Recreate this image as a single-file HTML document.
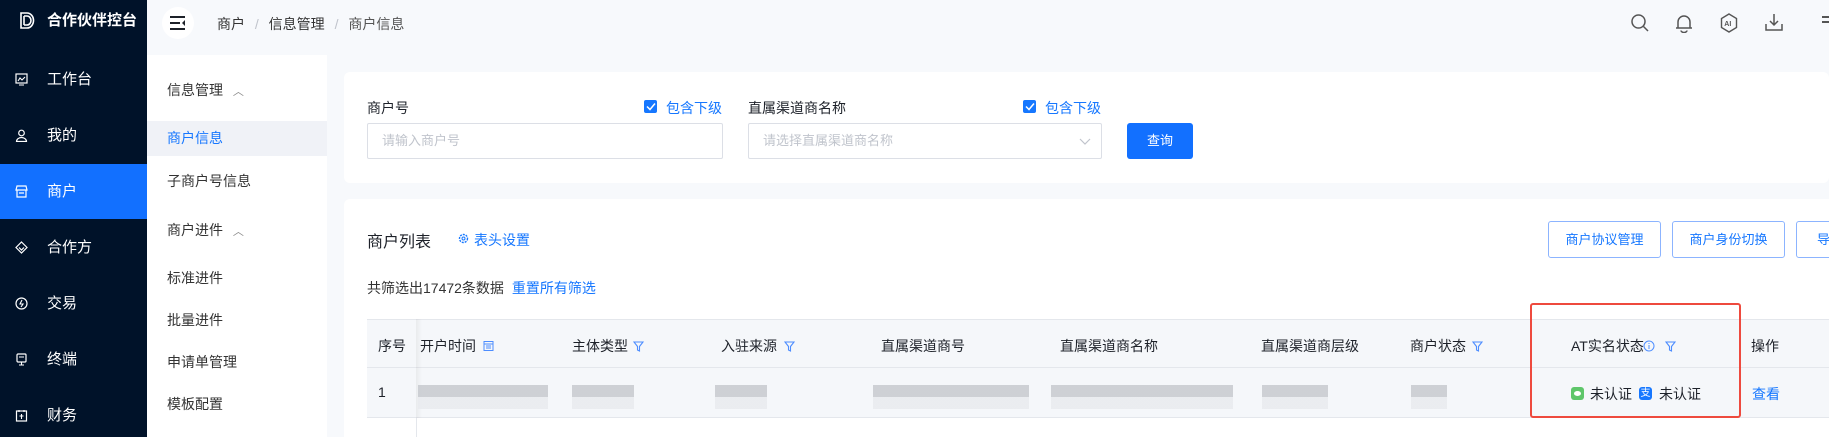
<!DOCTYPE html>
<html><head><meta charset="utf-8"><style>
*{margin:0;padding:0;box-sizing:border-box}
html,body{width:1829px;height:437px;overflow:hidden}
body{background:#f7f9fc;font-family:"Liberation Sans","Noto Sans CJK SC",sans-serif;font-size:14px;color:#1d2129;position:relative}
.a{position:absolute;white-space:nowrap}
.side{position:absolute;left:0;top:0;width:147px;height:437px;background:#001229;color:#fff}
.mi{position:absolute;left:0;width:147px;height:56px;line-height:56px;padding-left:47px;font-size:15px}
.mi svg{position:absolute;left:15px;top:21px}
.sub{position:absolute;left:147px;top:55px;width:180px;height:382px;background:#fff}
.si{position:absolute;left:20px;font-size:14px;color:#333;transform:translateY(-50%)}
.card{position:absolute;background:#fff;border-radius:6px}
.inp{position:absolute;border:1px solid #dcdfe6;border-radius:2px;height:36px;line-height:34px;padding-left:14px;color:#c0c4cc;font-size:13px}
.cb{position:absolute;width:13px;height:13px;background:#1677ff;border-radius:2px}
.btn{position:absolute;border:1px solid #8cb4ff;border-radius:3px;height:37px;line-height:35px;text-align:center;color:#1677ff;font-size:13px;background:#fff}
.th{position:absolute;top:346px;transform:translateY(-50%);font-size:14px;color:#1d2129}
.blur{position:absolute;height:24px;background:linear-gradient(#c4c7cc 0 50%,#e8eaee 50% 100%);opacity:.8}
</style></head><body>
<div class="side">
 <svg class="a" style="left:19px;top:12px" width="16" height="17" viewBox="0 0 16 17"><path d="M2 1h6a6.5 7.5 0 0 1 0 15H2z M5 4v9M5 4h3a4 4.5 0 0 1 0 9H5" fill="none" stroke="#fff" stroke-width="1.6"/></svg>
 <div class="a" style="left:47px;top:12px;font-size:15px;font-weight:bold;line-height:18px">合作伙伴控台</div>
 <div class="mi" style="top:52px"><svg width="13" height="13" viewBox="0 0 13 13"><rect x="1" y="1" width="11" height="9" fill="none" stroke="#fff" stroke-width="1.2"/><path d="M3 8l2-3 2 2 3-3M4 12h5" fill="none" stroke="#fff" stroke-width="1.1"/></svg>工作台</div>
 <div class="mi" style="top:108px"><svg width="13" height="13" viewBox="0 0 13 13"><circle cx="6.5" cy="4" r="2.8" fill="none" stroke="#fff" stroke-width="1.2"/><path d="M1.5 12.5a5 4 0 0 1 10 0z" fill="none" stroke="#fff" stroke-width="1.2"/></svg>我的</div>
 <div class="mi" style="top:164px;height:55px;background:#1270ff"><svg width="13" height="13" viewBox="0 0 13 13"><path d="M2 1h9l1 4H1zM2 5v7h9V5M4 8h5" fill="none" stroke="#fff" stroke-width="1.2"/></svg>商户</div>
 <div class="mi" style="top:220px"><svg width="13" height="13" viewBox="0 0 13 13"><path d="M6.5 1l5.5 5.5-5.5 5.5L1 6.5z M4 6.5l2.5 2.5 2.5-2.5" fill="none" stroke="#fff" stroke-width="1.2"/></svg>合作方</div>
 <div class="mi" style="top:276px"><svg width="13" height="13" viewBox="0 0 13 13"><circle cx="6.5" cy="6.5" r="5.5" fill="none" stroke="#fff" stroke-width="1.2"/><path d="M7 3L5 7h3l-2 3" fill="none" stroke="#fff" stroke-width="1.1"/></svg>交易</div>
 <div class="mi" style="top:332px"><svg width="13" height="13" viewBox="0 0 13 13"><rect x="2" y="1" width="9" height="8" rx="1" fill="none" stroke="#fff" stroke-width="1.2"/><path d="M4 12h5M6.5 9v3M4 4h5" fill="none" stroke="#fff" stroke-width="1.1"/></svg>终端</div>
 <div class="mi" style="top:388px;height:49px"><svg width="13" height="13" viewBox="0 0 13 13"><rect x="1.5" y="2" width="10" height="10" fill="none" stroke="#fff" stroke-width="1.2"/><path d="M4 1v2M9 1v2M6.5 5v5M4.5 7h4" fill="none" stroke="#fff" stroke-width="1.1"/></svg>财务</div>
</div>
<div class="a" style="left:162px;top:7px;width:32px;height:32px;border-radius:50%;background:#fff"></div>
<svg class="a" style="left:170px;top:16px" width="16" height="14" viewBox="0 0 16 14"><path d="M0 1h15M0 7h10M0 13h15" stroke="#1d2129" stroke-width="2"/><path d="M15 4l-3 3 3 3z" fill="#1d2129"/></svg>
<div class="a" style="left:217px;top:14px;font-size:14px;color:#333">商户 <span style="color:#c0c4cc;margin:0 6px">/</span> 信息管理 <span style="color:#c0c4cc;margin:0 6px">/</span> <span style="color:#555">商户信息</span></div>
<svg class="a" style="left:1630px;top:13px" width="20" height="20" viewBox="0 0 20 20"><circle cx="8.5" cy="8.5" r="6.5" fill="none" stroke="#555" stroke-width="1.5"/><path d="M13.5 13.5l4.5 4.5" stroke="#555" stroke-width="1.5"/></svg>
<svg class="a" style="left:1675px;top:13px" width="18" height="20" viewBox="0 0 18 20"><path d="M3 15V9a6 6 0 0 1 12 0v6zM1 15h16M6 17.5a3 2 0 0 0 6 0" fill="none" stroke="#555" stroke-width="1.5"/></svg>
<svg class="a" style="left:1720px;top:13px" width="18" height="20" viewBox="0 0 18 20"><path d="M9 1l7.5 4.5v9L9 19l-7.5-4.5v-9z" fill="none" stroke="#555" stroke-width="1.4"/><text x="4.3" y="13" font-size="7" font-family="Liberation Sans" font-weight="bold" fill="#555">AI</text></svg>
<svg class="a" style="left:1764px;top:12px" width="20" height="20" viewBox="0 0 20 20"><path d="M10 2v11M6 9l4 4 4-4M2 12v6h16v-6" fill="none" stroke="#555" stroke-width="1.5"/></svg>
<div class="a" style="left:1822px;top:16px;width:7px;height:2px;background:#555;box-shadow:0 5px 0 #555"></div>

<div class="sub">
 <div class="si" style="top:35px">信息管理 <span style="color:#888;font-size:11px;margin-left:6px">︿</span></div>
 <div class="a" style="left:0;top:66px;width:180px;height:35px;background:#f0f2f7"></div>
 <div class="si" style="top:83px;color:#1677ff">商户信息</div>
 <div class="si" style="top:126px">子商户号信息</div>
 <div class="si" style="top:175px">商户进件 <span style="color:#888;font-size:11px;margin-left:6px">︿</span></div>
 <div class="si" style="top:223px">标准进件</div>
 <div class="si" style="top:265px">批量进件</div>
 <div class="si" style="top:307px">申请单管理</div>
 <div class="si" style="top:349px">模板配置</div>
</div>

<div class="card" style="left:344px;top:72px;width:1485px;height:111px"></div>
<div class="a" style="left:367px;top:98px;font-size:14px">商户号</div>
<div class="cb" style="left:644px;top:100px"></div><svg class="a" style="left:646px;top:102px" width="10" height="9"><path d="M1 4.5l3 3 5-6" fill="none" stroke="#fff" stroke-width="1.5"/></svg>
<div class="a" style="left:666px;top:98px;color:#1677ff;font-size:14px">包含下级</div>
<div class="inp" style="left:367px;top:123px;width:356px">请输入商户号</div>
<div class="a" style="left:748px;top:98px;font-size:14px">直属渠道商名称</div>
<div class="cb" style="left:1023px;top:100px"></div><svg class="a" style="left:1025px;top:102px" width="10" height="9"><path d="M1 4.5l3 3 5-6" fill="none" stroke="#fff" stroke-width="1.5"/></svg>
<div class="a" style="left:1045px;top:98px;color:#1677ff;font-size:14px">包含下级</div>
<div class="inp" style="left:748px;top:123px;width:354px">请选择直属渠道商名称</div>
<svg class="a" style="left:1079px;top:138px" width="12" height="8"><path d="M1 1l5 5 5-5" fill="none" stroke="#c0c4cc" stroke-width="1.2"/></svg>
<div class="a" style="left:1127px;top:123px;width:66px;height:36px;background:#1270ff;border-radius:3px;color:#fff;text-align:center;line-height:36px;font-size:13px">查询</div>

<div class="card" style="left:344px;top:199px;width:1485px;height:238px;border-radius:6px 0 0 0"></div>
<div class="a" style="left:367px;top:228px;font-size:16px">商户列表</div>
<svg class="a" style="left:458px;top:233px" width="11" height="11" viewBox="0 0 11 11"><circle cx="5.5" cy="5.5" r="4" fill="none" stroke="#1677ff" stroke-width="1.4" stroke-dasharray="2 1"/><circle cx="5.5" cy="5.5" r="1.5" fill="none" stroke="#1677ff"/></svg>
<div class="a" style="left:474px;top:230px;color:#1677ff;font-size:14px">表头设置</div>
<div class="btn" style="left:1548px;top:221px;width:113px">商户协议管理</div>
<div class="btn" style="left:1672px;top:221px;width:113px">商户身份切换</div>
<div class="btn" style="left:1796px;top:221px;width:40px;text-align:left;padding-left:20px">导</div>
<div class="a" style="left:367px;top:278px;font-size:14px;color:#333">共筛选出17472条数据 <span style="color:#1677ff;margin-left:4px">重置所有筛选</span></div>

<div class="a" style="left:367px;top:319px;width:1462px;height:49px;background:#f5f7fa;border-top:1px solid #e4e7ec;border-bottom:1px solid #e4e7ec"></div>
<div class="a" style="left:367px;top:368px;width:1462px;height:50px;background:#f5f7fa;border-bottom:1px solid #e4e7ec"></div>
<div class="a" style="left:416px;top:319px;width:6px;height:118px;background:linear-gradient(90deg,rgba(0,0,0,.05),rgba(0,0,0,0))"></div>
<div class="a" style="left:367px;top:418px;width:1462px;height:19px;background:#fff"></div>
<div class="a" style="left:416px;top:418px;width:1px;height:19px;background:#e4e7ec"></div>
<div class="th" style="left:378px">序号</div>
<div class="th" style="left:420px">开户时间</div>
<svg class="a" style="left:483px;top:340px" width="11" height="11"><rect x="1" y="1.5" width="9" height="9" fill="none" stroke="#4d8dff"/><path d="M1 4h9M3 6h5M3 8h5" stroke="#4d8dff"/></svg>
<div class="th" style="left:572px">主体类型</div>
<div class="th" style="left:721px">入驻来源</div>
<div class="th" style="left:881px">直属渠道商号</div>
<div class="th" style="left:1060px">直属渠道商名称</div>
<div class="th" style="left:1261px">直属渠道商层级</div>
<div class="th" style="left:1410px">商户状态</div>
<div class="th" style="left:1571px">AT实名状态</div>
<svg class="a" style="left:1643px;top:340px" width="12" height="12"><circle cx="6" cy="6" r="5" fill="none" stroke="#4d8dff"/><path d="M6 5v4M6 3v1" stroke="#4d8dff"/></svg>
<div class="th" style="left:1751px">操作</div>
<svg class="a" style="left:633px;top:341px" width="11" height="11"><path d="M1 1h9L6.5 5.5V10L4.5 9V5.5z" fill="none" stroke="#4d8dff" stroke-width="1.1"/></svg>
<svg class="a" style="left:784px;top:341px" width="11" height="11"><path d="M1 1h9L6.5 5.5V10L4.5 9V5.5z" fill="none" stroke="#4d8dff" stroke-width="1.1"/></svg>
<svg class="a" style="left:1472px;top:341px" width="11" height="11"><path d="M1 1h9L6.5 5.5V10L4.5 9V5.5z" fill="none" stroke="#4d8dff" stroke-width="1.1"/></svg>
<svg class="a" style="left:1665px;top:341px" width="11" height="11"><path d="M1 1h9L6.5 5.5V10L4.5 9V5.5z" fill="none" stroke="#4d8dff" stroke-width="1.1"/></svg>

<div class="a" style="left:378px;top:384px;font-size:14px">1</div>
<div class="blur" style="left:418px;top:385px;width:130px"></div>
<div class="blur" style="left:572px;top:385px;width:62px"></div>
<div class="blur" style="left:715px;top:385px;width:52px"></div>
<div class="blur" style="left:873px;top:385px;width:156px"></div>
<div class="blur" style="left:1051px;top:385px;width:182px"></div>
<div class="blur" style="left:1262px;top:385px;width:66px"></div>
<div class="blur" style="left:1411px;top:385px;width:36px"></div>
<div class="a" style="left:1571px;top:387px;width:13px;height:13px;background:#5ec66a;border-radius:3px"></div>
<div class="a" style="left:1574px;top:391px;width:7px;height:5px;background:#fff;border-radius:50%"></div>
<div class="a" style="left:1590px;top:384px;font-size:14px">未认证</div>
<div class="a" style="left:1639px;top:387px;width:13px;height:13px;background:#1677ff;border-radius:3px;color:#fff;font-size:10px;line-height:13px;text-align:center">支</div>
<div class="a" style="left:1659px;top:384px;font-size:14px">未认证</div>
<div class="a" style="left:1752px;top:384px;font-size:14px;color:#1677ff">查看</div>
<div class="a" style="left:1530px;top:303px;width:211px;height:115px;border:2px solid #ee4a3e;border-radius:3px"></div>
</body></html>
